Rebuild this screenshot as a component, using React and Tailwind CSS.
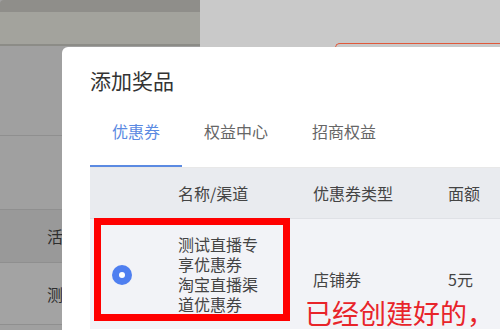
export default function App() {
  const tabs = ["优惠券", "权益中心", "招商权益"];

  return (
    <div className="relative w-[500px] h-[330px] overflow-hidden bg-[#a0a0a0] font-['Noto_Sans_CJK_SC',sans-serif]">
      {/* page behind the mask */}
      <div className="flex h-[47px]">
        <div className="w-[200px] flex flex-col rounded-tl-[4px] overflow-hidden">
          <div className="h-[12px] bg-[#8f8e8a]" />
          <div className="h-[32px] bg-[#a3a39d]" />
          <div className="h-[2px] bg-[#8c8c87]" />
          <div className="h-[1px] bg-[#a0a0a0]" />
        </div>
        <div className="flex-1 bg-[#c9c9c9] pt-[43px] pl-[135px]">
          <div className="h-[8px] border-t border-l border-[#e0583a] rounded-tl-[5px]" />
        </div>
      </div>

      <div className="flex flex-col text-[16px] text-[#2e2e2e]">
        <div className="h-[89px] border-b border-[#8f8f8f]" />
        <div className="h-[74px] border-b border-[#8f8f8f]" />
        <div className="h-[53px] bg-[#999999] border-b border-[#8f8f8f] flex items-center pl-[47px]">
          活动
        </div>
        <div className="h-[62px] bg-[#a3a3a3] border-b border-[#8f8f8f] flex items-center pl-[47px]">
          测试
        </div>
      </div>

      {/* dialog */}
      <div className="absolute left-[62px] top-[47px] w-[480px] h-[320px] bg-white rounded-tl-[6px] pl-[28px]">
        <div className="pt-[19px] text-[21px] leading-[28px] text-[#333333]">添加奖品</div>

        <div className="flex mt-[25px] border-b border-[#e8e8e8]">
          {tabs.map((t, i) => (
            <div
              key={t}
              className={
                i === 0
                  ? "px-[22px] pb-[22px] text-[16px] leading-[24px] text-[#5b8ae2] border-b-2 border-[#5b8ae2]"
                  : "px-[22px] pb-[22px] text-[16px] leading-[24px] text-[#666666] border-b-2 border-transparent"
              }
            >
              {t}
            </div>
          ))}
        </div>

        <div className="text-[16px] text-[#444444]">
          <div className="flex items-center h-[51px] bg-[#e9ebef] border-b border-[#dfe1e6]">
            <div className="w-[88px]" />
            <div className="w-[135px]">名称/渠道</div>
            <div className="w-[135px]">优惠券类型</div>
            <div className="flex-1">面额</div>
          </div>
          <div className="flex bg-[#f2f3f7] h-[110px]">
            <div className="w-[88px] flex justify-center pr-[24px] pt-[46px]">
              <div className="w-[20px] h-[20px] rounded-full bg-[#4f7ff0] flex items-center justify-center">
                <div className="w-[6px] h-[6px] rounded-full bg-white" />
              </div>
            </div>
            <div className="w-[135px] leading-[20px] pt-[15px]">
              <div className="w-[82px]">测试直播专享优惠券</div>
              <div className="w-[82px]">淘宝直播渠道优惠券</div>
            </div>
            <div className="w-[135px] pt-[49px] leading-[22px]">店铺券</div>
            <div className="flex-1 pt-[49px] leading-[22px]">5元</div>
          </div>
        </div>
      </div>

      {/* annotations */}
      <div className="absolute left-[94px] top-[218px] w-[196px] h-[103px] border-[7px] border-[#ff0000]" />
      <div className="absolute left-[305px] top-[297px] text-[27px] leading-[32px] text-[#e8242a] whitespace-nowrap">
        已经创建好的，
      </div>
    </div>
  );
}
